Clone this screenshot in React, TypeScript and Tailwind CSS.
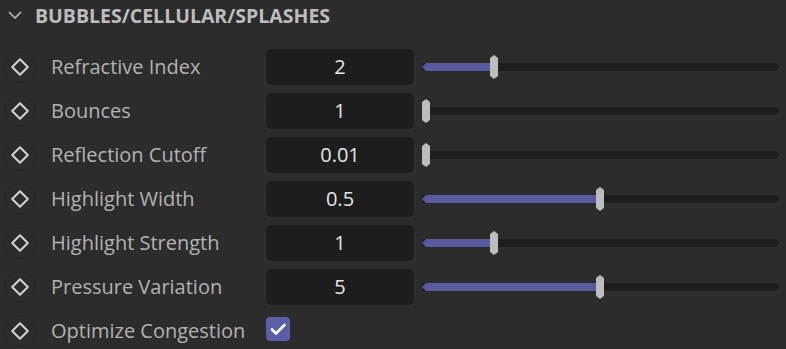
import React from "react";

type Row = { label: string; value: string; pct: number };

const rows: Row[] = [
  { label: "Refractive Index", value: "2", pct: 0.195 },
  { label: "Bounces", value: "1", pct: 0 },
  { label: "Reflection Cutoff", value: "0.01", pct: 0 },
  { label: "Highlight Width", value: "0.5", pct: 0.497 },
  { label: "Highlight Strength", value: "1", pct: 0.195 },
  { label: "Pressure Variation", value: "5", pct: 0.497 },
];

const KeyIcon: React.FC = () => (
  <div className="w-8 h-8 rounded-full border border-[#272727] flex items-center justify-center shrink-0">
    <svg width="20" height="20" viewBox="0 0 20 20" fill="none">
      <path d="M10 2.2 L17.8 10 L10 17.8 L2.2 10 Z" stroke="#d2d2d2" strokeWidth="2" strokeLinejoin="round" />
    </svg>
  </div>
);

const Slider: React.FC<{ pct: number }> = ({ pct }) => {
  const travel = 350;
  const left = Math.round(pct * travel);
  return (
    <div className="relative h-9 w-[358px] ml-2 flex items-center">
      <div className="w-full h-2 bg-[#1e1e1e] [clip-path:polygon(0_0,calc(100%-4px)_0,100%_50%,calc(100%-4px)_100%,0_100%)]" />
      {left > 0 && (
        <div
          className="absolute left-0 top-[14px] h-2 bg-[#585c9f] [clip-path:polygon(4px_0,100%_0,100%_100%,4px_100%,0_50%)]"
          style={{ width: left + 4 }}
        />
      )}
      <div
        className="absolute top-[6px] w-2 h-6 bg-[#bdbdbd] [clip-path:polygon(50%_0,100%_3px,100%_calc(100%-3px),50%_100%,0_calc(100%-3px),0_3px)]"
        style={{ left }}
      />
    </div>
  );
};

export default function App() {
  return (
    <div className="w-[786px] h-[349px] bg-[#2c2c2c] overflow-hidden font-['Open_Sans',sans-serif]">
      <div className="h-8 flex items-center pl-2 gap-[13px]">
        <svg width="14" height="8" viewBox="0 0 14 8" fill="none" className="-mt-[2px]">
          <path d="M1 1 L7 7 L13 1" stroke="#bdbdbd" strokeWidth="1.6" />
        </svg>
        <span className="text-[19.5px] font-bold text-[#bdbdbd]">BUBBLES/CELLULAR/SPLASHES</span>
      </div>
      <div className="flex flex-col gap-2 pt-[17px] pl-1">
        {rows.map((r) => (
          <div key={r.label} className="flex items-center h-9">
            <KeyIcon />
            <span className="ml-[15px] w-[215px] text-[20px] text-[#b3b3b3]">{r.label}</span>
            <div className="w-[148px] h-9 rounded-md bg-[#1d1d1d] flex items-center justify-center text-[20px] text-[#e6e6e6]">
              {r.value}
            </div>
            <Slider pct={r.pct} />
          </div>
        ))}
        <div className="flex items-center h-9">
          <KeyIcon />
          <span className="ml-[15px] w-[215px] text-[20px] text-[#b3b3b3]">Optimize Congestion</span>
          <div className="w-6 h-6 -mt-1 rounded-[4px] bg-[#5a5ea6] flex items-center justify-center">
            <svg width="24" height="24" viewBox="0 0 24 24" fill="none">
              <path d="M6 12.5 L10 16.5 L18.5 8" stroke="#ffffff" strokeWidth="2.6" strokeLinecap="round" strokeLinejoin="round" />
            </svg>
          </div>
        </div>
      </div>
    </div>
  );
}
